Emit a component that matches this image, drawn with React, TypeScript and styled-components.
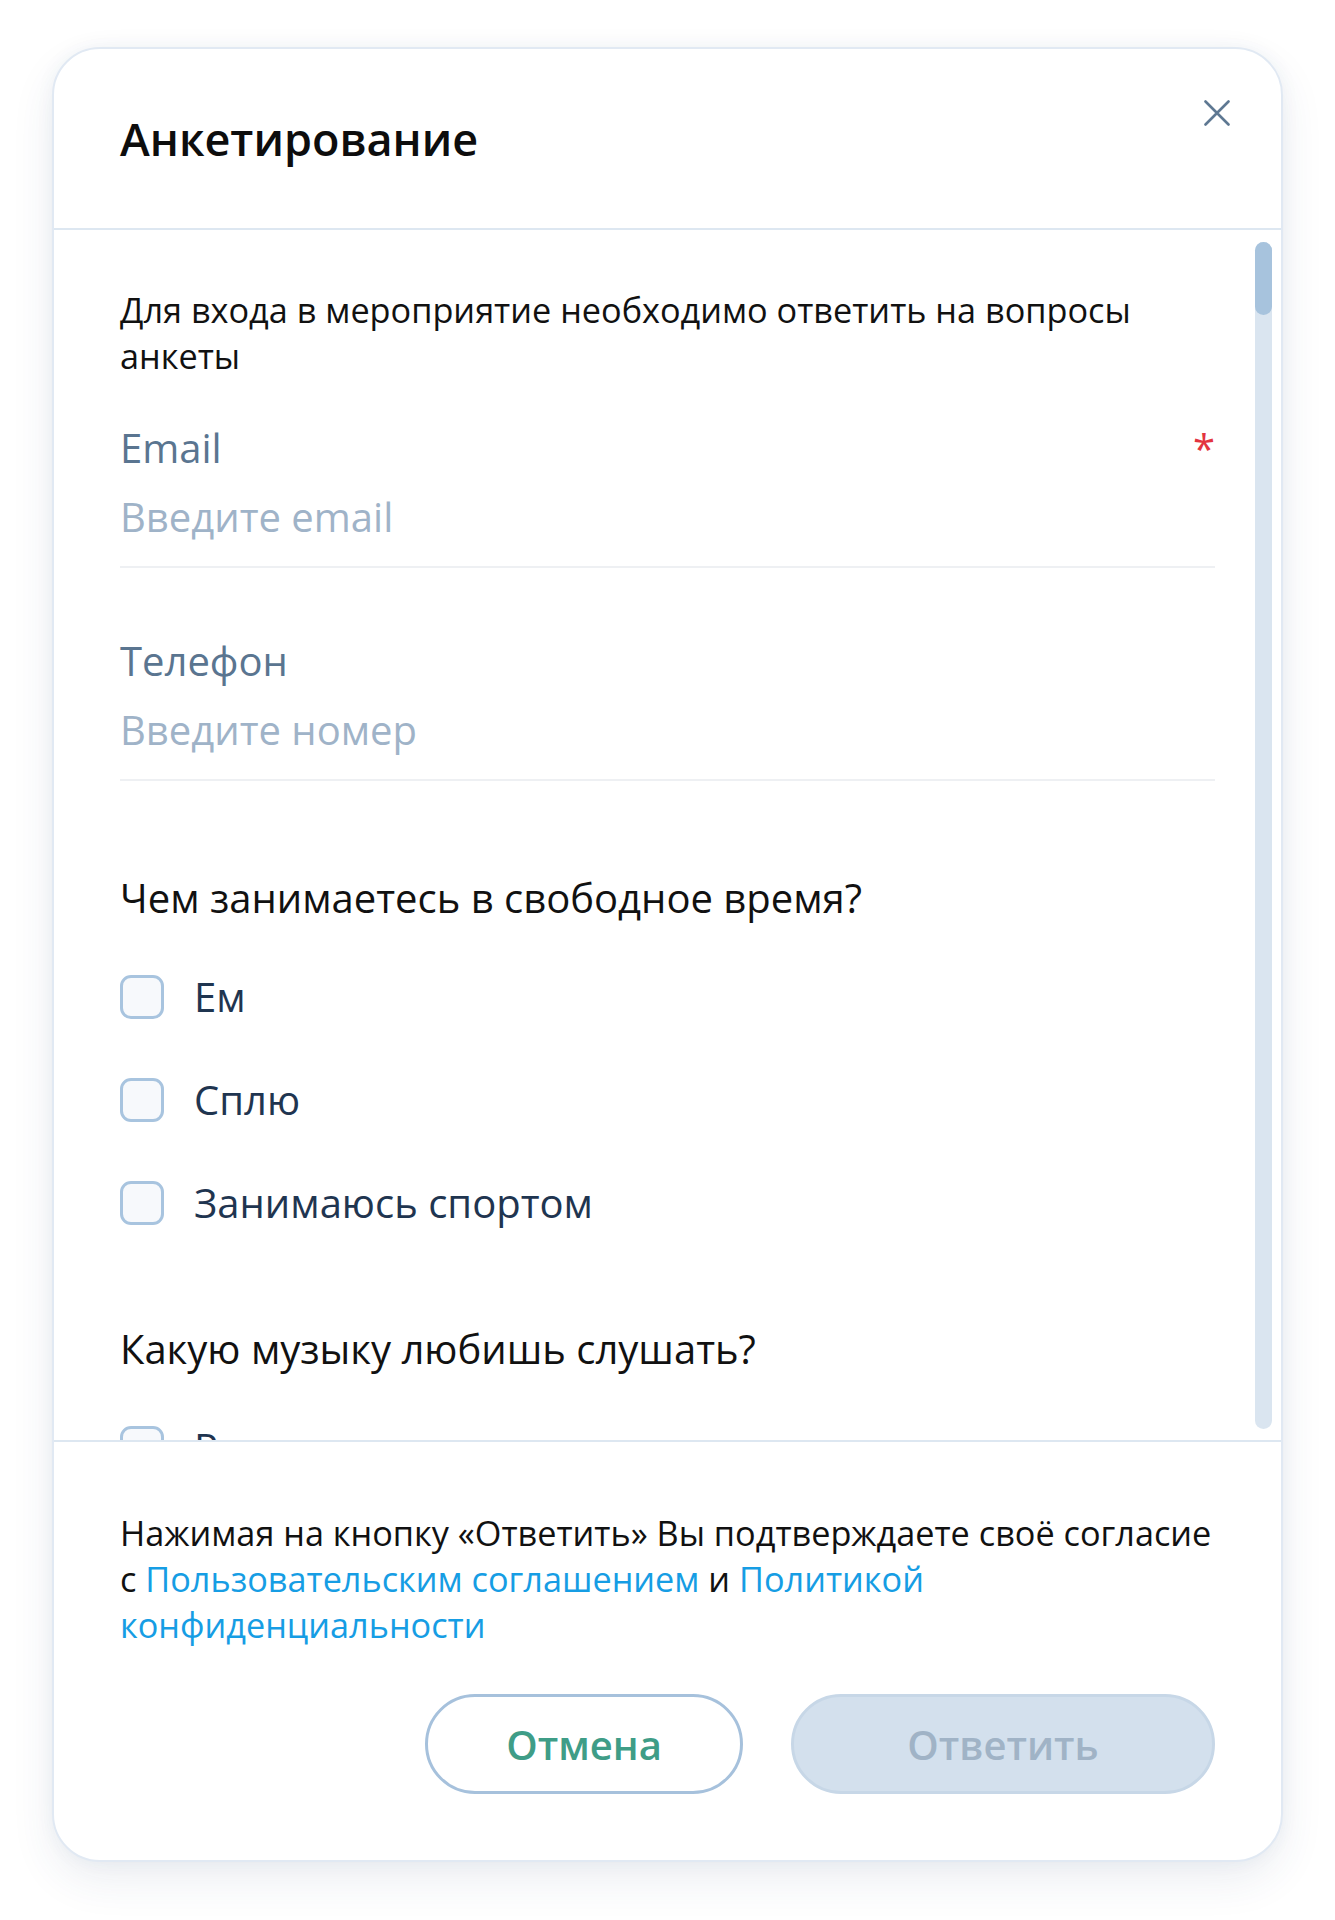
import React from 'react'
import styled, { createGlobalStyle } from 'styled-components'

const GlobalStyle = createGlobalStyle`
  html, body {
    margin: 0;
    padding: 0;
    background: #ffffff;
  }
  body {
    font-family: 'Open Sans', 'Noto Sans', sans-serif;
    -webkit-font-smoothing: antialiased;
  }
  * {
    box-sizing: border-box;
  }
`

type Option = { id: string; label: string }
type Question = { id: string; title: string; options: Option[] }

const QUESTIONS: Question[] = [
  {
    id: 'free-time',
    title: 'Чем занимаетесь в свободное время?',
    options: [
      { id: 'eat', label: 'Ем' },
      { id: 'sleep', label: 'Сплю' },
      { id: 'sport', label: 'Занимаюсь спортом' },
    ],
  },
  {
    id: 'music',
    title: 'Какую музыку любишь слушать?',
    options: [{ id: 'rock', label: 'Рок' }],
  },
]

const Page = styled.div`
  padding: 47px 52px 58px 52px;
`

const Card = styled.div`
  width: 1231px;
  height: 1815px;
  display: flex;
  flex-direction: column;
  background: #ffffff;
  border: 2px solid #e1e9f3;
  border-radius: 48px;
  box-shadow: 0 18px 44px rgba(40, 70, 110, 0.09), 0 0 18px rgba(40, 70, 110, 0.05);
  overflow: hidden;
`

const Header = styled.div`
  flex: 0 0 auto;
  height: 181px;
  display: flex;
  align-items: flex-start;
  justify-content: space-between;
  padding: 0 51px 0 66px;
  border-bottom: 2px solid #dde7f1;
`

const Title = styled.h1`
  margin: 61px 0 0 0;
  font-size: 45px;
  line-height: 58px;
  font-weight: 600;
  color: #0d0d0d;
`

const CloseButton = styled.button`
  margin-top: 51px;
  width: 26px;
  height: 26px;
  padding: 0;
  border: none;
  background: transparent;
  display: flex;
  cursor: pointer;
`

const Body = styled.div`
  flex: 1 1 auto;
  min-height: 0;
  display: flex;
`

const Content = styled.div`
  flex: 1 1 auto;
  min-width: 0;
  overflow: hidden;
  padding: 57px 40px 0 66px;
`

const Track = styled.div`
  flex: 0 0 17px;
  margin: 12px 9px 11px 0;
  border-radius: 9px;
  background: #dae5f0;
`

const Thumb = styled.div`
  height: 73px;
  border-radius: 9px;
  background: #a7c3dd;
`

const Intro = styled.p`
  margin: 0;
  font-size: 34.25px;
  line-height: 46px;
  color: #111111;
`

const Field = styled.div<{ $first?: boolean }>`
  margin-top: ${(p) => (p.$first ? '46px' : '70px')};
  border-bottom: 2px solid #eef0f3;
  padding-bottom: 24px;
`

const LabelRow = styled.div`
  display: flex;
  justify-content: space-between;
  align-items: center;
`

const FieldLabel = styled.label`
  font-size: 40px;
  line-height: 46px;
  color: #5a7590;
`

const Required = styled.span`
  font-size: 40px;
  line-height: 46px;
  color: #e3343f;
  transform: translateY(1px);
`

const Input = styled.input`
  display: block;
  width: 100%;
  margin-top: 21px;
  padding: 0;
  border: none;
  outline: none;
  background: transparent;
  font-family: inherit;
  font-size: 40px;
  line-height: 50px;
  height: 50px;
  color: #1f3550;

  &::placeholder {
    color: #9fb3c8;
  }
`

const QuestionBlock = styled.div<{ $first?: boolean }>`
  margin-top: ${(p) => (p.$first ? '92px' : '96px')};
`

const QuestionTitle = styled.div`
  font-size: 40px;
  line-height: 50px;
  color: #111111;
  margin-bottom: 49px;
`

const OptionList = styled.div`
  display: flex;
  flex-direction: column;
  gap: 53px;
`

const OptionRow = styled.label`
  display: flex;
  align-items: center;
  gap: 30px;
  height: 50px;
  cursor: pointer;
`

const Box = styled.span`
  flex: 0 0 44px;
  width: 44px;
  height: 44px;
  border: 3px solid #a8c4df;
  border-radius: 11px;
  background: #f7f9fc;
`

const OptionText = styled.span`
  font-size: 40px;
  line-height: 50px;
  color: #1f3550;
`

const Footer = styled.div`
  flex: 0 0 auto;
  border-top: 2px solid #dde7f1;
  padding: 68px 66px 66px 66px;
`

const Consent = styled.p`
  margin: 0;
  font-size: 34.25px;
  line-height: 46px;
  color: #111111;
`

const Link = styled.a`
  color: #169de4;
  text-decoration: none;
`

const Actions = styled.div`
  margin-top: 46px;
  display: flex;
  justify-content: flex-end;
  gap: 48px;
`

const Button = styled.button<{ $variant: 'ghost' | 'disabled' }>`
  height: 100px;
  border-radius: 50px;
  font-family: inherit;
  font-size: 40px;
  font-weight: 600;
  cursor: pointer;
  width: ${(p) => (p.$variant === 'ghost' ? '318px' : '424px')};
  border: 3px solid ${(p) => (p.$variant === 'ghost' ? '#a6c1dc' : '#c7d7e7')};
  background: ${(p) => (p.$variant === 'ghost' ? '#ffffff' : '#d3e0ed')};
  color: ${(p) => (p.$variant === 'ghost' ? '#3f9d87' : '#a0b3c6')};
`

const CloseIcon = () => (
  <svg width="26" height="26" viewBox="0 0 26 26" fill="none">
    <path d="M1.5 1.5L24.5 24.5M24.5 1.5L1.5 24.5" stroke="#5e7892" strokeWidth="2.6" strokeLinecap="round" />
  </svg>
)

export default function App() {
  return (
    <>
      <GlobalStyle />
      <Page>
        <Card>
          <Header>
            <Title>Анкетирование</Title>
            <CloseButton aria-label="Закрыть">
              <CloseIcon />
            </CloseButton>
          </Header>
          <Body>
            <Content>
              <Intro>Для входа в мероприятие необходимо ответить на вопросы анкеты</Intro>
              <Field $first>
                <LabelRow>
                  <FieldLabel>Email</FieldLabel>
                  <Required>*</Required>
                </LabelRow>
                <Input type="email" placeholder="Введите email" />
              </Field>
              <Field>
                <LabelRow>
                  <FieldLabel>Телефон</FieldLabel>
                </LabelRow>
                <Input type="tel" placeholder="Введите номер" />
              </Field>
              {QUESTIONS.map((q, i) => (
                <QuestionBlock key={q.id} $first={i === 0}>
                  <QuestionTitle>{q.title}</QuestionTitle>
                  <OptionList>
                    {q.options.map((o) => (
                      <OptionRow key={o.id}>
                        <Box />
                        <OptionText>{o.label}</OptionText>
                      </OptionRow>
                    ))}
                  </OptionList>
                </QuestionBlock>
              ))}
            </Content>
            <Track>
              <Thumb />
            </Track>
          </Body>
          <Footer>
            <Consent>
              Нажимая на кнопку «Ответить» Вы подтверждаете своё согласие с{' '}
              <Link href="#">Пользовательским соглашением</Link> и{' '}
              <Link href="#">Политикой конфиденциальности</Link>
            </Consent>
            <Actions>
              <Button $variant="ghost">Отмена</Button>
              <Button $variant="disabled" disabled>
                Ответить
              </Button>
            </Actions>
          </Footer>
        </Card>
      </Page>
    </>
  )
}
